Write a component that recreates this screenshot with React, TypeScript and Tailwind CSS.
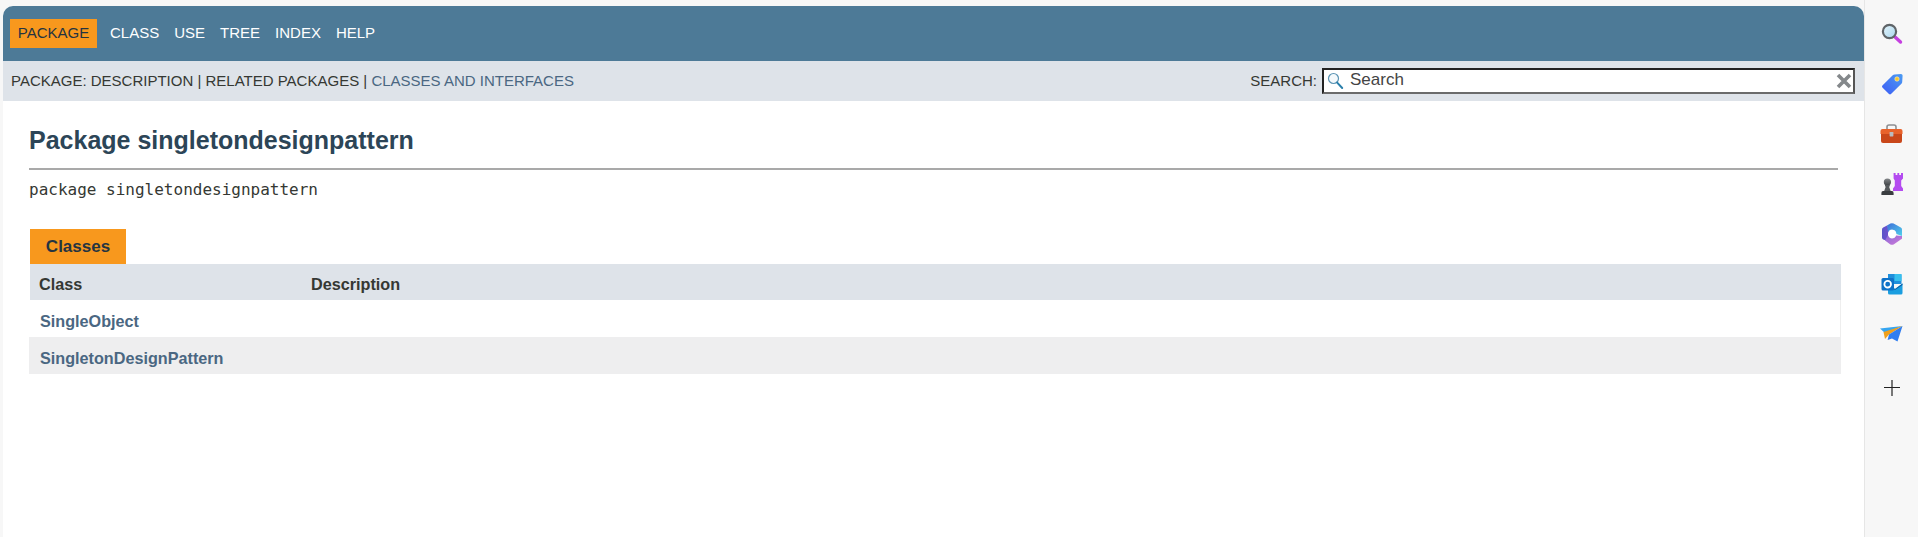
const navItems = ['CLASS', 'USE', 'TREE', 'INDEX', 'HELP']
const sans = "font-['Liberation_Sans',Arial,sans-serif]"

function SearchGlyph() {
  return (
    <svg width="17" height="18" viewBox="0 0 17 18" fill="none" className="ml-[3px] shrink-0">
      <circle cx="6.5" cy="6.5" r="5" stroke="#5b94b4" strokeWidth="1.2" fill="#f4f9fc" />
      <path d="M10.2 10.6 L15.2 16" stroke="#2a7fab" strokeWidth="2" strokeLinecap="round" />
    </svg>
  )
}

function MagnifierIcon() {
  return (
    <svg width="22" height="22" viewBox="0 0 22 22">
      <defs>
        <linearGradient id="lens" x1="0" y1="0" x2="1" y2="1">
          <stop offset="0" stopColor="#e4f4fb" />
          <stop offset="1" stopColor="#a9d6ee" />
        </linearGradient>
      </defs>
      <path d="M13.5 13.5 L19.5 19" stroke="#c53fe0" strokeWidth="3.4" strokeLinecap="round" />
      <circle cx="8.5" cy="8.5" r="6.6" fill="url(#lens)" stroke="#5f6468" strokeWidth="2.2" />
    </svg>
  )
}

function TagIcon() {
  return (
    <svg width="22" height="22" viewBox="0 0 22 22">
      <defs>
        <linearGradient id="tag" x1="0" y1="1" x2="1" y2="0">
          <stop offset="0" stopColor="#3d5cf5" />
          <stop offset="1" stopColor="#4c9cf2" />
        </linearGradient>
      </defs>
      <path d="M1.4 12.6 L12 2 Q12.6 1.4 13.6 1.4 L20 1 Q21.6 1 21.6 2.6 L21.2 9 Q21.2 10 20.4 10.8 L10 21 Q9 21.8 8 21 L1.4 14.6 Q0.6 13.6 1.4 12.6 Z" fill="url(#tag)" />
      <circle cx="16" cy="6" r="2.2" fill="#f4c531" stroke="#fff3c0" strokeWidth="0.6" />
    </svg>
  )
}

function ToolboxIcon() {
  return (
    <svg width="23" height="20" viewBox="0 0 23 20">
      <path d="M7 6 V3 Q7 1 9 1 H14 Q16 1 16 3 V6" fill="none" stroke="#8d8f92" strokeWidth="1.6" />
      <path d="M0.5 7 Q0.5 5 2.5 5 H20.5 Q22.5 5 22.5 7 V10 H0.5 Z" fill="#e8622b" />
      <path d="M1 10 H22 V17 Q22 19 20 19 H3 Q1 19 1 17 Z" fill="#c9471a" />
      <rect x="9.6" y="8" width="3.8" height="4.4" rx="0.6" fill="#b9bcc0" />
    </svg>
  )
}

function ChessIcon() {
  return (
    <svg width="24" height="24" viewBox="0 0 24 24">
      <defs>
        <linearGradient id="pawn" x1="0" y1="0" x2="0" y2="1">
          <stop offset="0" stopColor="#85888b" />
          <stop offset="1" stopColor="#3d4043" />
        </linearGradient>
      </defs>
      <path d="M13.6 1 H15.6 V3 H17.4 V1 H19.2 V3 H21 V1 H23 V6.5 L21.2 8.5 V14 L23 16.5 V19 H13 V16.5 L14.8 14 V8.5 L13.6 6.5 Z" fill="#b44bf0" />
      <circle cx="7.4" cy="10" r="3.6" fill="url(#pawn)" />
      <path d="M5 13 H9.8 V14.4 H9 L10.8 19.4 H4 L5.8 14.4 H5 Z" fill="#55585b" />
      <path d="M1.4 21 Q1.4 19 3 19 H12 Q13.6 19 13.6 21 V23 H1.4 Z" fill="#3a3d40" />
    </svg>
  )
}

function CopilotIcon() {
  return (
    <svg width="22" height="22" viewBox="0 0 22 22">
      <defs>
        <linearGradient id="m365a" x1="0" y1="0" x2="1" y2="0">
          <stop offset="0" stopColor="#5a55c8" />
          <stop offset="1" stopColor="#7a4fd0" />
        </linearGradient>
        <linearGradient id="m365b" x1="0" y1="0" x2="1" y2="1">
          <stop offset="0" stopColor="#3f6fd8" />
          <stop offset="1" stopColor="#4fd0ec" />
        </linearGradient>
        <linearGradient id="m365c" x1="0" y1="0" x2="1" y2="1">
          <stop offset="0" stopColor="#8a6ad8" />
          <stop offset="1" stopColor="#d07ad8" />
        </linearGradient>
      </defs>
      <path d="M1 6.5 Q1 5.2 2.2 4.5 L6 2.4 L8.5 7.5 L7 11 L10 19.2 L2.2 16.5 Q1 15.8 1 14.5 Z" fill="url(#m365a)" />
      <path d="M6 2.4 L9.4 0.6 Q11 0 12.6 0.6 L19.8 4.5 Q21 5.2 21 6.5 V13 L15.5 11 Q15 7 11 6.6 Q8.5 6.6 7 9 Z" fill="url(#m365b)" />
      <path d="M21 13 V15.5 Q21 15.8 19.8 16.5 L12.6 21.4 Q11 22 9.4 21.4 L4 17.5 L7 12 Q8 15.4 11 15.4 Q14 15.4 15 12.5 Z" fill="url(#m365c)" />
      <circle cx="11" cy="11" r="4" fill="#fff" />
    </svg>
  )
}

function OutlookIcon() {
  return (
    <svg width="22" height="22" viewBox="0 0 22 22">
      <path d="M7 1 H19.5 Q20.5 1 20.5 2 V11 H7 Z" fill="#1f8fdc" />
      <path d="M13.5 1 H20.5 V8 H13.5 Z" fill="#37c0ee" />
      <path d="M7 11 L14 16 L21.5 10.5 V20 Q21.5 21.5 20 21.5 H8.5 Q7 21.5 7 20 Z" fill="#1a9ee0" />
      <path d="M7 11 L14 16 L21.5 10.5 V12 L14 17 L7 12 Z" fill="#0c5fa8" />
      <rect x="0.5" y="5" width="12.5" height="12.5" rx="1.5" fill="#0f72c8" />
      <circle cx="6.7" cy="11.2" r="3.3" fill="none" stroke="#fff" strokeWidth="1.8" />
    </svg>
  )
}

function PlaneIcon() {
  return (
    <svg width="23" height="17" viewBox="0 0 23 17">
      <path d="M0 2.5 L22.5 0 L5 7 Z" fill="#35a5f0" />
      <path d="M5 13 L3.5 6 L22.5 0 L9 8.6 Z" fill="#f0a01c" />
      <path d="M22.5 0 L17.5 15.5 L12 12.4 L7.6 14 L9 8.6 Z" fill="#2f7df0" />
    </svg>
  )
}

function PlusIcon() {
  return (
    <svg width="16" height="16" viewBox="0 0 16 16">
      <rect x="7" y="0" width="2" height="16" fill="#777777" />
      <rect x="0" y="7" width="16" height="1" fill="#222222" />
    </svg>
  )
}

export default function App() {
  return (
    <div className={`flex h-[537px] w-[1918px] overflow-hidden bg-[#f7f7f7] ${sans}`}>
      {/* Page */}
      <div className="ml-[3px] mt-[6px] flex w-[1861px] flex-col overflow-hidden rounded-t-[10px] bg-white">
        <div className="flex h-[55px] items-start bg-[#4d7a97] pl-[7px] pt-[13px] text-[15px] text-white">
          <span className="flex h-[29px] w-[87px] items-center justify-center bg-[#f8981d] text-[#253441]">PACKAGE</span>
          <div className="ml-[13px] flex h-[29px] items-center gap-[15px]">
            {navItems.map((item) => (
              <span key={item}>{item}</span>
            ))}
          </div>
        </div>

        <div className="flex h-[40px] items-center justify-between bg-[#dee3e9] pl-[8px] pr-[9px] text-[15px] text-[#353833]">
          <div>
            PACKAGE: DESCRIPTION | RELATED PACKAGES | <span className="text-[#4a6782]">CLASSES AND INTERFACES</span>
          </div>
          <div className="flex items-center gap-[5px]">
            <span>SEARCH:</span>
            <div className="flex h-[26px] w-[533px] items-center border-2 border-[#222222] border-b-[#6b6b6b] border-r-[#555555] bg-white">
              <SearchGlyph />
              <span className="mb-[2px] ml-[6px] flex-1 text-[17px] leading-[20px] text-[#444444]">Search</span>
              <svg width="16" height="16" viewBox="0 0 16 16" className="mr-[1px]">
                <path d="M2 2 L14 14 M14 2 L2 14" stroke="#84888b" strokeWidth="3.6" />
              </svg>
            </div>
          </div>
        </div>

        <div className="pl-[26px] pt-[25px]">
          <h1 className="text-[25px] font-bold leading-[28px] text-[#2c4557]">Package singletondesignpattern</h1>
          <div className="mt-[14px] h-[2px] w-[1809px] bg-[#a9a9a9]" />
          <p className="mt-[10px] font-['DejaVu_Sans_Mono',monospace] text-[16px] leading-[20px] text-[#353833]">package singletondesignpattern</p>

          <div className="ml-px mt-[29px] flex h-[35px] w-[96px] items-center justify-center bg-[#f8981d] pt-[1px] text-[17px] font-bold text-[#253441]">
            Classes
          </div>
          <div className="w-[1812px] text-[16.2px] font-bold">
            <div className="ml-px flex h-[36px] items-center bg-[#dee3e9] pl-[9px] pt-[5px] text-[#353833]">
              <span className="w-[272px]">Class</span>
              <span>Description</span>
            </div>
            <div className="ml-px flex h-[37px] items-center border-r border-[#eeeeee] bg-white pl-[10px] pt-[5px] text-[#4a6782]">SingleObject</div>
            <div className="flex h-[37px] items-center bg-[#eeeeef] pl-[11px] pt-[5px] text-[#4a6782]">SingletonDesignPattern</div>
          </div>
        </div>
      </div>

      {/* Browser sidebar */}
      <div className="flex w-[54px] flex-col items-center border-l border-[#e6e6e6] pt-[23px]">
        <div className="flex h-[22px] items-center justify-center"><MagnifierIcon /></div>
        <div className="mt-[28px] flex h-[22px] items-center justify-center"><TagIcon /></div>
        <div className="mt-[28px] flex h-[22px] items-center justify-center"><ToolboxIcon /></div>
        <div className="mt-[28px] flex h-[22px] items-center justify-center"><ChessIcon /></div>
        <div className="mt-[28px] flex h-[22px] items-center justify-center"><CopilotIcon /></div>
        <div className="mt-[28px] flex h-[22px] items-center justify-center"><OutlookIcon /></div>
        <div className="mt-[28px] flex h-[22px] items-center justify-center"><PlaneIcon /></div>
        <div className="mt-[35px]"><PlusIcon /></div>
      </div>
    </div>
  )
}
